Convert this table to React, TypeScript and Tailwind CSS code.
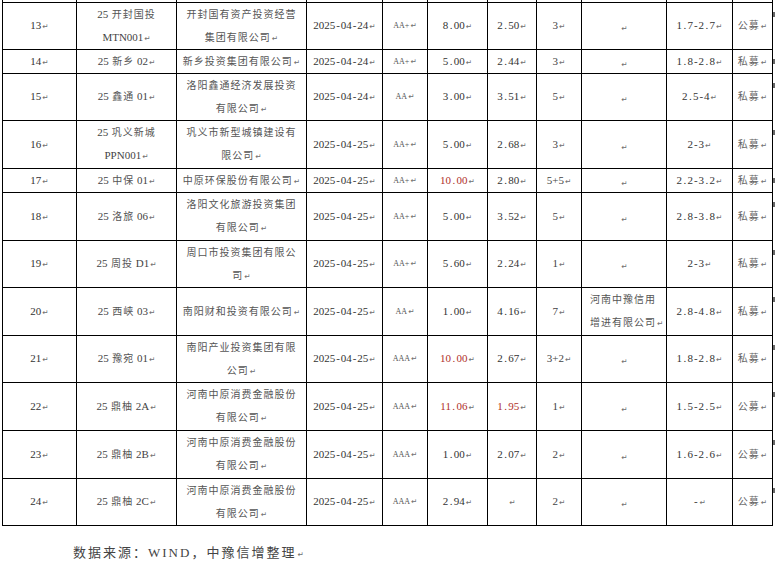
type Row = {
  no: string;
  name: string[];
  co: string[];
  date: string;
  rate: string;
  amt: string;
  cpn: string;
  term: string;
  guar: string[];
  range: string;
  kind: string;
  h: string;
  red?: ("amt" | "cpn")[];
};

const ZY = ["河南中原消费金融股份", "有限公司"];

const rows: Row[] = [
  { no: "13", name: ["25 开封国投", "MTN001"], co: ["开封国有资产投资经营", "集团有限公司"], date: "2025-04-24", rate: "AA+", amt: "8.00", cpn: "2.50", term: "3", guar: [], range: "1.7-2.7", kind: "公募", h: "h-[46px]" },
  { no: "14", name: ["25 新乡 02"], co: ["新乡投资集团有限公司"], date: "2025-04-24", rate: "AA+", amt: "5.00", cpn: "2.44", term: "3", guar: [], range: "1.8-2.8", kind: "私募", h: "h-[23px]" },
  { no: "15", name: ["25 鑫通 01"], co: ["洛阳鑫通经济发展投资", "有限公司"], date: "2025-04-24", rate: "AA", amt: "3.00", cpn: "3.51", term: "5", guar: [], range: "2.5-4", kind: "私募", h: "h-[46px]" },
  { no: "16", name: ["25 巩义新城", "PPN001"], co: ["巩义市新型城镇建设有", "限公司"], date: "2025-04-25", rate: "AA+", amt: "5.00", cpn: "2.68", term: "3", guar: [], range: "2-3", kind: "私募", h: "h-[47px]" },
  { no: "17", name: ["25 中保 01"], co: ["中原环保股份有限公司"], date: "2025-04-25", rate: "AA+", amt: "10.00", cpn: "2.80", term: "5+5", guar: [], range: "2.2-3.2", kind: "私募", h: "h-[23px]", red: ["amt"] },
  { no: "18", name: ["25 洛旅 06"], co: ["洛阳文化旅游投资集团", "有限公司"], date: "2025-04-25", rate: "AA+", amt: "5.00", cpn: "3.52", term: "5", guar: [], range: "2.8-3.8", kind: "私募", h: "h-[47px]" },
  { no: "19", name: ["25 周投 D1"], co: ["周口市投资集团有限公", "司"], date: "2025-04-25", rate: "AA+", amt: "5.60", cpn: "2.24", term: "1", guar: [], range: "2-3", kind: "私募", h: "h-[46px]" },
  { no: "20", name: ["25 西峡 03"], co: ["南阳财和投资有限公司"], date: "2025-04-25", rate: "AA", amt: "1.00", cpn: "4.16", term: "7", guar: ["河南中豫信用", "增进有限公司"], range: "2.8-4.8", kind: "私募", h: "h-[47px]" },
  { no: "21", name: ["25 豫宛 01"], co: ["南阳产业投资集团有限", "公司"], date: "2025-04-25", rate: "AAA", amt: "10.00", cpn: "2.67", term: "3+2", guar: [], range: "1.8-2.8", kind: "私募", h: "h-[46px]", red: ["amt"] },
  { no: "22", name: ["25 鼎柚 2A"], co: ZY, date: "2025-04-25", rate: "AAA", amt: "11.06", cpn: "1.95", term: "1", guar: [], range: "1.5-2.5", kind: "公募", h: "h-[47px]", red: ["amt", "cpn"] },
  { no: "23", name: ["25 鼎柚 2B"], co: ZY, date: "2025-04-25", rate: "AAA", amt: "1.00", cpn: "2.07", term: "2", guar: [], range: "1.6-2.6", kind: "公募", h: "h-[47px]" },
  { no: "24", name: ["25 鼎柚 2C"], co: ZY, date: "2025-04-25", rate: "AAA", amt: "2.94", cpn: "", term: "2", guar: [], range: "-", kind: "公募", h: "h-[46px]" },
];

const widths = [74, 100, 130, 76, 45, 60, 49, 45, 85, 66, 40, 3];

function Mark() {
  return (
    <span className="ml-[1px] font-['DejaVu_Sans'] text-[7.5px] leading-none tracking-normal text-[#6f6f6f]">
      ↵
    </span>
  );
}

// SimSun-style half-width punctuation: give "." and "-" a full digit cell
function Num({ s }: { s: string }) {
  return (
    <>
      {s.split("").map((c, i) =>
        c === "." || c === "-" ? (
          <span key={i} className="inline-block w-[5.5px] text-center">
            {c}
          </span>
        ) : (
          <span key={i}>{c}</span>
        )
      )}
    </>
  );
}

function Cell({ h, className, children }: { h: string; className?: string; children: React.ReactNode }) {
  return (
    <td className="border border-black p-0 align-middle">
      <div className={"flex flex-col justify-center overflow-hidden " + h + " " + (className ?? "")}>
        {children}
      </div>
    </td>
  );
}

function Line({ children, last }: { children: React.ReactNode; last?: boolean }) {
  return (
    <div className="h-[23px] whitespace-nowrap leading-[23px]">
      {children}
      {last && <Mark />}
    </div>
  );
}

export default function App() {
  return (
    <div className="h-[566px] w-[775px] overflow-hidden bg-white font-['Liberation_Serif','Noto_Sans_CJK_SC',serif]">
      <table className="ml-[2px] w-[773px] table-fixed border-collapse">
        <colgroup>
          {widths.map((w, i) => (
            <col key={i} style={{ width: w }} />
          ))}
        </colgroup>
        <tbody>
          <tr>
            {widths.slice(0, 11).map((_, i) => (
              <td key={i} className="h-[2px] border-x border-black p-0" />
            ))}
            <td className="p-0" />
          </tr>
          {rows.map((r) => {
            const numCls = (k: "amt" | "cpn") =>
              "text-center text-[11px] " + (r.red?.includes(k) ? "text-[#b0302a]" : "text-[#333]");
            return (
              <tr key={r.no}>
                <Cell h={r.h} className="text-center text-[11px] text-[#333]">
                  <Line last>{r.no}</Line>
                </Cell>
                <Cell h={r.h} className="text-center text-[11px] text-[#444]">
                  {r.name.map((l, i) => (
                    <Line key={i} last={i === r.name.length - 1}>
                      {l.split(" ").map((p, j) =>
                        /[\u4e00-\u9fff]/.test(p) ? (
                          <span key={j} className="text-[10px] tracking-[1px] text-[#555]">
                            {" "}
                            {p}
                          </span>
                        ) : (
                          <span key={j}>{j > 0 ? " " + p : p}</span>
                        )
                      )}
                    </Line>
                  ))}
                </Cell>
                <Cell h={r.h} className="text-center text-[10px] tracking-[1px] text-[#555]">
                  {r.co.map((l, i) => (
                    <Line key={i} last={i === r.co.length - 1}>
                      {l}
                    </Line>
                  ))}
                </Cell>
                <Cell h={r.h} className="text-center text-[11px] text-[#333]">
                  <Line last>
                    <Num s={r.date} />
                  </Line>
                </Cell>
                <Cell h={r.h} className="text-center text-[8px] text-[#555]">
                  <Line last>{r.rate}</Line>
                </Cell>
                <Cell h={r.h} className={numCls("amt")}>
                  <Line last>
                    <Num s={r.amt} />
                  </Line>
                </Cell>
                <Cell h={r.h} className={numCls("cpn")}>
                  <Line last>
                    <Num s={r.cpn} />
                  </Line>
                </Cell>
                <Cell h={r.h} className="text-center text-[11px] text-[#444]">
                  <Line last>{r.term}</Line>
                </Cell>
                {r.guar.length ? (
                  <Cell h={r.h} className="pl-[8px] text-left text-[10px] tracking-[1px] text-[#555]">
                    {r.guar.map((l, i) => (
                      <Line key={i} last={i === r.guar.length - 1}>
                        {l}
                      </Line>
                    ))}
                  </Cell>
                ) : (
                  <Cell h={r.h} className="text-center">
                    <Line last>{""}</Line>
                  </Cell>
                )}
                <Cell h={r.h} className="text-center text-[11px] text-[#333]">
                  <Line last>
                    <Num s={r.range} />
                  </Line>
                </Cell>
                <Cell h={r.h} className="text-center text-[10px] tracking-[1px] text-[#666]">
                  <Line last>{r.kind}</Line>
                </Cell>
                <td className="border-0 p-0 align-top">
                  <div className="mt-[10px] h-[5px] w-[3px] bg-[#666]" />
                </td>
              </tr>
            );
          })}
        </tbody>
      </table>
      <p className="mt-[18px] pl-[73px] text-[13px] leading-[18px] tracking-[2px] text-[#444]">
        数据来源：WIND，中豫信增整理
        <Mark />
      </p>
    </div>
  );
}
